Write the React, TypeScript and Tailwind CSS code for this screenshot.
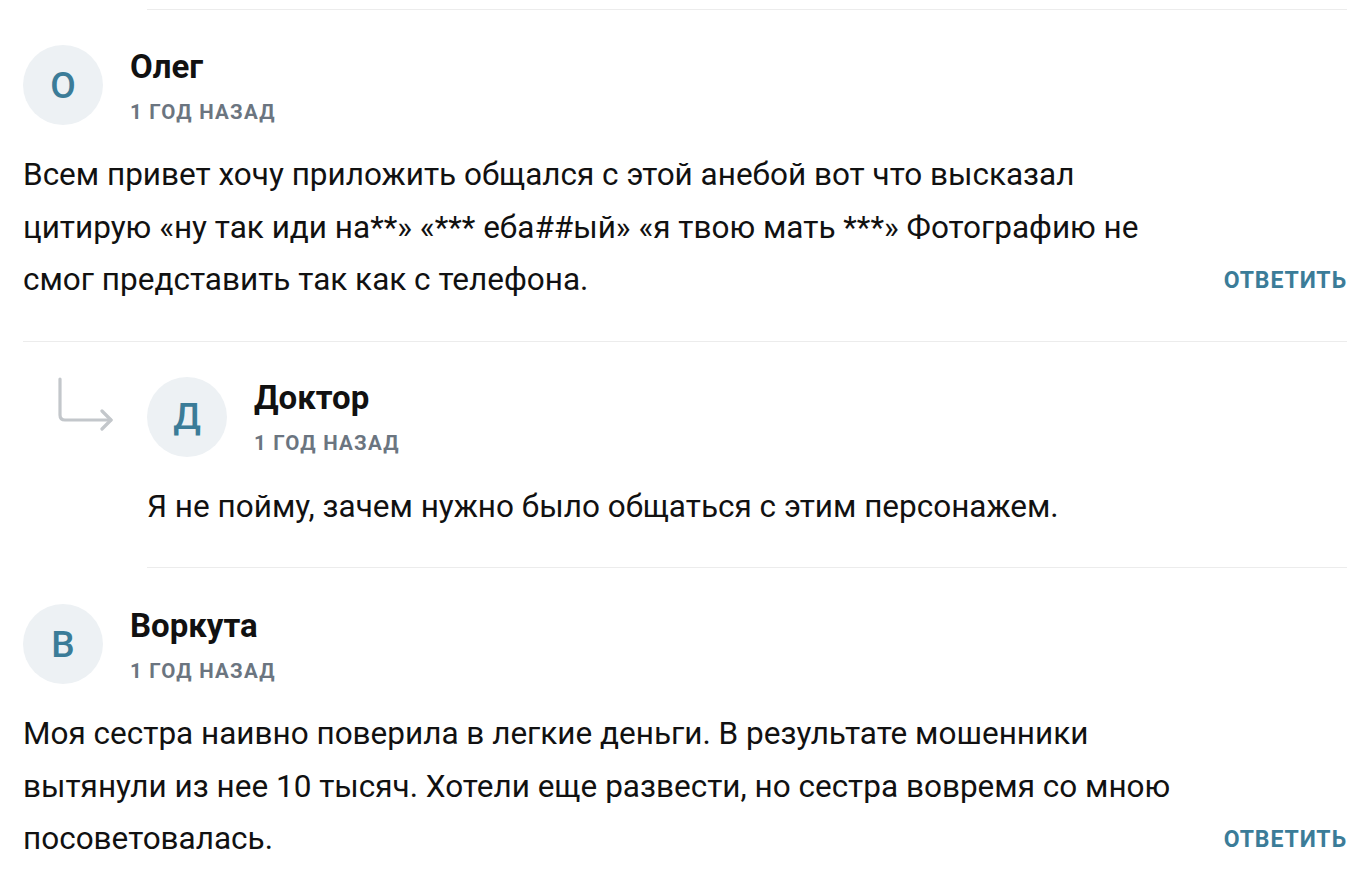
import React from 'react';

type CommentProps = {
  initial: string;
  name: string;
  date: string;
  text: string;
  reply?: boolean;
};

const ReplyArrow = () => (
  <svg width="56" height="56" viewBox="0 0 56 56" fill="none" className="text-[#c3c7cb]">
    <path
      d="M3 2 V38 Q3 43 8 43 H54"
      stroke="currentColor"
      strokeWidth="3.2"
      strokeLinecap="round"
      strokeLinejoin="round"
    />
    <path d="M45 34 L54 43 L45 52" stroke="currentColor" strokeWidth="3.2" strokeLinecap="round" strokeLinejoin="round" />
  </svg>
);

const Comment: React.FC<CommentProps> = ({ initial, name, date, text, reply }) => (
  <div className="flex flex-col">
    <div className="flex items-center gap-[27px]">
      <div className="w-[80px] h-[80px] rounded-full bg-[#edf1f4] flex items-center justify-center shrink-0">
        <span className="text-[37px] font-medium text-[#3b7c98] leading-none">{initial}</span>
      </div>
      <div className="flex flex-col">
        <span className="text-[33px] font-bold text-[#111111] leading-[40px]">{name}</span>
        <span className="text-[20.5px] font-bold uppercase tracking-[0.06em] text-[#6b7580] leading-[24px] mt-[13px]">
          {date}
        </span>
      </div>
    </div>
    <div className="flex items-end mt-[24px]">
      <p className="w-[1165px] text-[31.5px] leading-[52.5px] text-[#111111]">{text}</p>
      {!reply && (
        <button className="ml-auto text-[23px] font-bold uppercase tracking-[0.04em] text-[#3b7c98] leading-[52px]">
          Ответить
        </button>
      )}
    </div>
  </div>
);

export default function App() {
  return (
    <div className="min-h-screen bg-white font-['Roboto',sans-serif]">
      <div className="pl-[23px] pr-[25px]">
        <div className="ml-[124px] h-px bg-[#ececec] mt-[9px]" />
        <div className="pt-[35px] pb-[34px]">
          <Comment
            initial="О"
            name="Олег"
            date="1 год назад"
            text="Всем привет хочу приложить общался с этой анебой вот что высказал цитирую «ну так иди на**» «*** еба##ый» «я твою мать ***» Фотографию не смог представить так как с телефона."
          />
        </div>
        <div className="h-px bg-[#ececec]" />
        <div className="flex pt-[35px] pb-[34px]">
          <div className="w-[124px] shrink-0 pl-[34px]">
            <ReplyArrow />
          </div>
          <div className="flex-1">
            <Comment
              reply
              initial="Д"
              name="Доктор"
              date="1 год назад"
              text="Я не пойму, зачем нужно было общаться с этим персонажем."
            />
          </div>
        </div>
        <div className="ml-[124px] h-px bg-[#ececec]" />
        <div className="pt-[36px] pb-[35px]">
          <Comment
            initial="В"
            name="Воркута"
            date="1 год назад"
            text="Моя сестра наивно поверила в легкие деньги. В результате мошенники вытянули из нее 10 тысяч. Хотели еще развести, но сестра вовремя со мною посоветовалась."
          />
        </div>
      </div>
    </div>
  );
}
